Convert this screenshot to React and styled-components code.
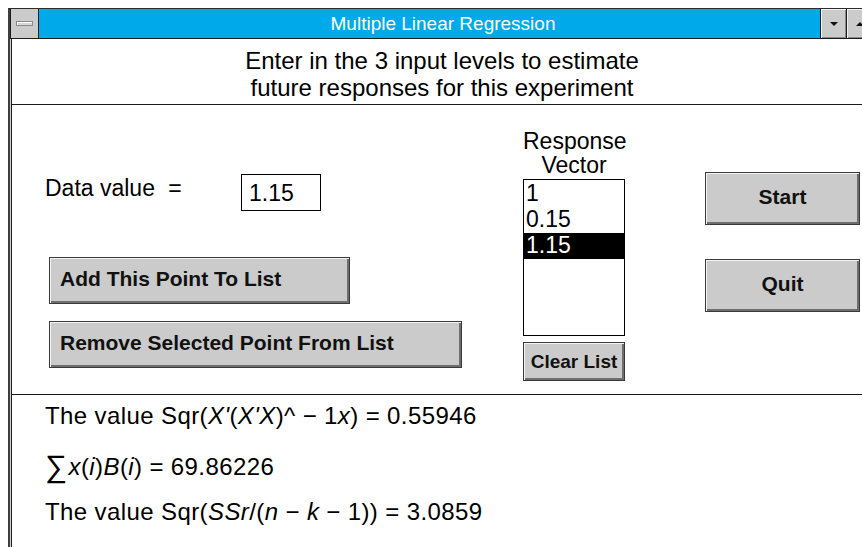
import React from 'react';
import styled, { createGlobalStyle } from 'styled-components';

const TITLE_BLUE = '#00a9e9';
const FACE = '#cbcbcb';
const LINE = '#1c1c1c';
const FONT = '"Liberation Sans", Arial, Helvetica, sans-serif';

const GlobalStyle = createGlobalStyle`
  html, body {
    margin: 0;
    padding: 0;
    background: #ffffff;
    overflow: hidden;
  }
  body {
    font-family: ${FONT};
    color: #000000;
  }
`;

const responses = ['1', '0.15', '1.15'];
const SELECTED = 2;

export default function App() {
  return (
    <>
      <GlobalStyle />
      <Window>
        <Frame>
          <TitleBar>
            <SysBox>
              <SysBar />
            </SysBox>
            <TitleText>Multiple Linear Regression</TitleText>
            <CapButton>
              <Triangle dir="down" />
            </CapButton>
            <CapButton>
              <Triangle dir="up" />
            </CapButton>
          </TitleBar>

          <Header>
            Enter in the 3 input levels to estimate
            <br />
            future responses for this experiment
          </Header>

          <Body>
            <LeftCol>
              <DataRow>
                <DataLabel>
                  Data value <Op>=</Op>
                </DataLabel>
                <DataInput>1.15</DataInput>
              </DataRow>
              <WideButton width={301} top={46}>Add This Point To List</WideButton>
              <WideButton width={413} top={17}>Remove Selected Point From List</WideButton>
            </LeftCol>

            <MidCol>
              <ListLabel>
                Response
                <br />
                Vector
              </ListLabel>
              <ListBox>
                {responses.map((r, i) => (
                  <ListItem key={i} selected={i === SELECTED}>
                    {r}
                  </ListItem>
                ))}
              </ListBox>
              <ClearButton>Clear List</ClearButton>
            </MidCol>

            <RightCol>
              <BigButton>Start</BigButton>
              <BigButton>Quit</BigButton>
            </RightCol>
          </Body>

          <Results>
            <ResultLine top={6}>
              The value Sqr(<i>X'</i>(<i>X'X</i>)^<Op>−</Op>1<i>x</i>)<Op>=</Op>0.55946
            </ResultLine>
            <ResultLine top={21}>
              <Sigma>∑</Sigma>
              <i>x</i>(<i>i</i>)<i>B</i>(<i>i</i>)<Op>=</Op>69.86226
            </ResultLine>
            <ResultLine top={15}>
              The value Sqr(<i>SSr</i>/(<i>n</i>
              <Op>−</Op>
              <i>k</i>
              <Op>−</Op>1))<Op>=</Op>3.0859
            </ResultLine>
          </Results>
        </Frame>
      </Window>
    </>
  );
}

const Window = styled.div`
  margin: 8px 0 0 8px;
  width: 864px;
  height: 539px;
  display: flex;
  border-top: 1px solid #2c2c2c;
  border-left: 2px solid #3e3e3e;
  padding-left: 1px;
  background: #d4d4d4;
  box-sizing: border-box;
`;

const Frame = styled.div`
  flex: 1;
  display: flex;
  flex-direction: column;
  border-left: 1px solid ${LINE};
  background: #ffffff;
`;

const TitleBar = styled.div`
  height: 29px;
  display: flex;
  align-items: stretch;
  background: ${TITLE_BLUE};
  border-bottom: 1px solid ${LINE};
  margin-left: -2px;
`;

const SysBox = styled.div`
  width: 27px;
  background: ${FACE};
  border: 1px solid ${LINE};
  border-top: none;
  border-bottom: none;
  display: flex;
  align-items: center;
  justify-content: center;
`;

const SysBar = styled.div`
  width: 15px;
  height: 3px;
  background: #d8d8d8;
  border: 1px solid #8a8a8a;
  box-shadow: inset 1px 1px 0 #ffffff;
`;

const TitleText = styled.div`
  flex: 1;
  padding-left: 27px;
  text-align: center;
  color: #ffffff;
  font-size: 19px;
  line-height: 29px;
`;

const CapButton = styled.div`
  width: 25px;
  background: ${FACE};
  border-left: 1px solid ${LINE};
  box-shadow: inset 1px 1px 0 #f2f2f2, inset -1px -1px 0 #8a8a8a;
  display: flex;
  align-items: center;
  justify-content: center;
`;

const Triangle = styled.div`
  width: 0;
  height: 0;
  border-left: 4px solid transparent;
  border-right: 4px solid transparent;
  ${(p) =>
    p.dir === 'down'
      ? `border-top: 4px solid #111;`
      : `border-bottom: 4px solid #111;`}
`;

const Header = styled.div`
  height: 57px;
  padding-top: 8px;
  text-align: center;
  font-size: 24px;
  line-height: 27px;
  border-bottom: 1px solid ${LINE};
`;

const Body = styled.div`
  height: 289px;
  display: flex;
  border-bottom: 1px solid ${LINE};
`;

const LeftCol = styled.div`
  width: 478px;
  padding-left: 33px;
  padding-top: 69px;
  display: flex;
  flex-direction: column;
  align-items: flex-start;
`;

const DataRow = styled.div`
  display: flex;
  align-items: center;
`;

const Op = styled.span`
  margin: 0 7px;
`;

const DataLabel = styled.div`
  width: 196px;
  font-size: 23px;
  line-height: 26px;
  margin-bottom: 9px;
`;

const DataInput = styled.div`
  width: 80px;
  height: 37px;
  box-sizing: border-box;
  border: 1px solid #000;
  padding: 5px 0 0 7px;
  font-size: 23px;
  line-height: 26px;
`;

const Button = styled.div`
  box-sizing: border-box;
  background: ${FACE};
  border: 1px solid #3a3a3a;
  box-shadow: inset 1px 1px 0 #f4f4f4, inset -2px -2px 0 #6e6e6e;
  font-weight: bold;
  color: #111;
  display: flex;
  align-items: center;
`;

const WideButton = styled(Button)`
  width: ${(p) => p.width}px;
  height: 47px;
  margin: ${(p) => p.top}px 0 0 4px;
  padding: 0 0 4px 10px;
  font-size: 21px;
`;

const MidCol = styled.div`
  width: 102px;
  padding-top: 24px;
  display: flex;
  flex-direction: column;
`;

const ListLabel = styled.div`
  text-align: center;
  font-size: 23px;
  line-height: 24px;
`;

const ListBox = styled.div`
  margin-top: 2px;
  height: 157px;
  box-sizing: border-box;
  border: 1px solid #000;
  padding-top: 1px;
`;

const ListItem = styled.div`
  height: 26px;
  padding-left: 2px;
  font-size: 23px;
  line-height: 25px;
  background: ${(p) => (p.selected ? '#000' : 'transparent')};
  color: ${(p) => (p.selected ? '#fff' : '#000')};
`;

const ClearButton = styled(Button)`
  margin-top: 6px;
  height: 39px;
  justify-content: center;
  font-size: 19px;
`;

const RightCol = styled.div`
  margin-left: 80px;
  width: 155px;
  padding-top: 67px;
  display: flex;
  flex-direction: column;
  gap: 34px;
`;

const BigButton = styled(Button)`
  height: 53px;
  justify-content: center;
  padding-bottom: 4px;
  font-size: 21px;
`;

const Results = styled.div`
  padding-left: 33px;
  font-size: 24px;
  letter-spacing: 0.4px;
`;

const ResultLine = styled.div`
  margin-top: ${(p) => p.top}px;
  height: 30px;
  line-height: 30px;
  white-space: nowrap;
`;

const Sigma = styled.span`
  font-size: 31px;
  vertical-align: -2px;
  margin-right: 1px;
`;
